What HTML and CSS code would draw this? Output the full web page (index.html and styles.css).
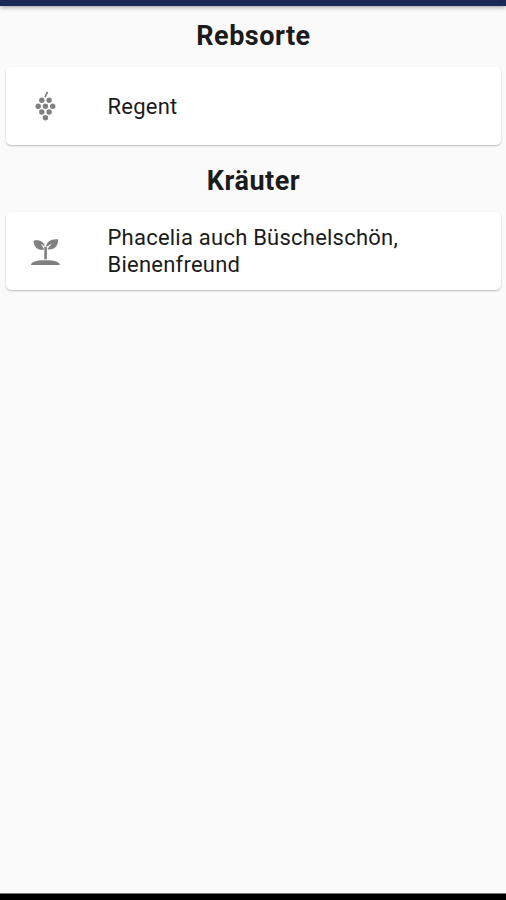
FILE: index.html
```html
<!DOCTYPE html>
<html lang="de">
<head>
  <meta charset="UTF-8">
  <meta name="viewport" content="width=device-width, initial-scale=1.0">
  <title>Rebsorte</title>
  <link rel="stylesheet" href="styles.css">
</head>
<body>
  <header class="appbar"></header>
  <main class="content">
    <h2 class="title">Rebsorte</h2>
    <div class="card">
      <svg class="icon" viewBox="0.6 0 32 32">
        <path d="M15.6 7.2L18.2 1.8" stroke="#808080" stroke-width="1.7"/>
        <circle cx="12.4" cy="10.3" r="2.7"/>
        <circle cx="19.7" cy="10.3" r="2.7"/>
        <circle cx="8.8" cy="16.2" r="2.7"/>
        <circle cx="16" cy="16.2" r="2.7"/>
        <circle cx="23.3" cy="16.2" r="2.7"/>
        <circle cx="12.4" cy="22" r="2.7"/>
        <circle cx="19.7" cy="22" r="2.7"/>
        <circle cx="16" cy="27.7" r="2.7"/>
      </svg>
      <span class="name">Regent</span>
    </div>

    <h2 class="title">Kräuter</h2>
    <div class="card">
      <svg class="icon" viewBox="0.6 -0.3 32 32">
        <path d="M4.2 5.4C10 4 14.6 6.3 15.5 11.3L11.3 8.4L15 14.3C8.5 15.5 4.3 11.8 4.2 5.4Z"/>
        <path d="M28.7 4C29 11.3 24.5 15 17.8 14L22.6 8.3L16.7 11.7C17 6.2 22 3.2 28.7 4Z"/>
        <path d="M14.9 11.5H17.5V24H14.9Z"/>
        <path d="M1.5 29.7C1.9 26.7 6 25 16 25S30.1 26.7 30.5 29.7Z"/>
      </svg>
      <span class="name">Phacelia auch Büschelschön, Bienenfreund</span>
    </div>
  </main>
  <footer class="navbar"></footer>
</body>
</html>
```
FILE: styles.css
```css
body {
    margin: 0;
    height: 900px;
    display: flex;
    flex-direction: column;
    background: #fafafa;
    color: #1b1b1b;
    font-family: Roboto, sans-serif;
}
.appbar {
    height: 6px;
    background: #1a2855;
    box-shadow: 0 1px 5px rgba(0, 0, 0, 0.4);
}
.content { flex: 1; padding: 0 5px 0 6px; }
.title {
    margin: 0;
    height: 61px;
    line-height: 60px;
    font-size: 27px;
    font-weight: 700;
    letter-spacing: 0.5px;
    text-align: center;
}
.card {
    display: flex;
    align-items: center;
    height: 78px;
    margin-bottom: 6px;
    padding: 0 60px 0 23.5px;
    box-sizing: border-box;
    background: #fff;
    border-radius: 5px;
    box-shadow: 0 1px 2px rgba(0, 0, 0, 0.25);
}
.icon {
    flex: none;
    width: 32px;
    height: 32px;
    margin-right: 46px;
    fill: #808080;
}
.name {
    font-size: 22px;
    line-height: 27px;
    letter-spacing: 0.23px;
}
.navbar {
    height: 6px;
    background: #000;
    border-top: 1px solid #777;
}
```
